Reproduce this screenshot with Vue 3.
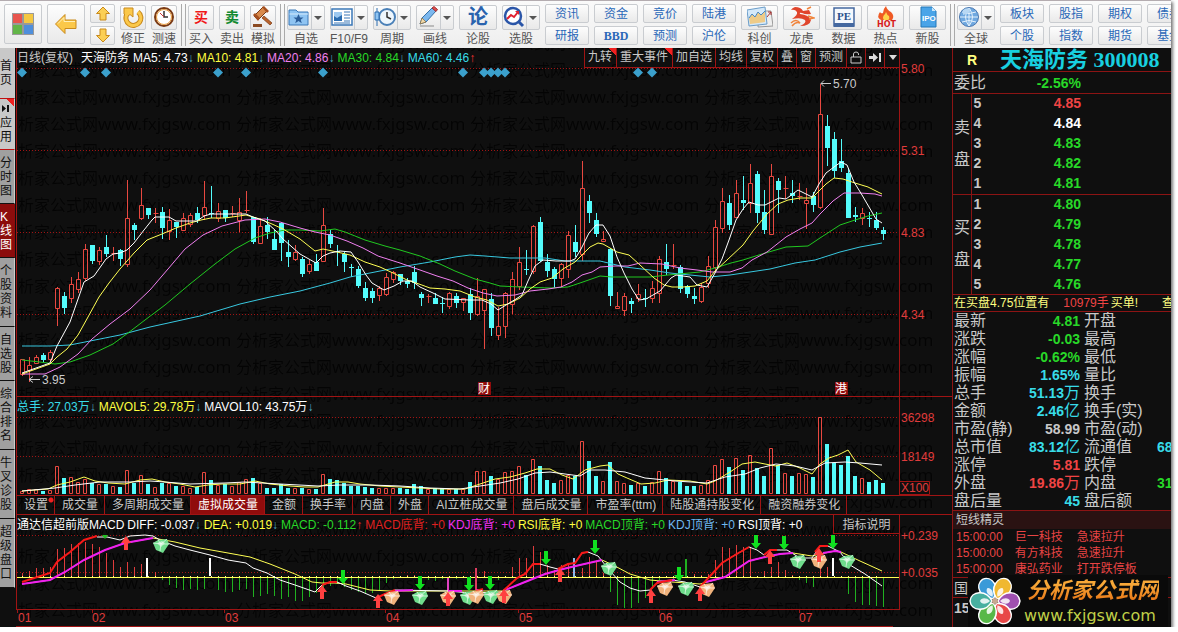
<template>
  <div class="window">
    <header class="toolbar">
      <div class="group">
        <button class="tile big" aria-label="menu"><svg width="22" height="22" viewBox="0 0 22 22" v-html="icons.menu"></svg></button>
        <button class="tile big" aria-label="back"><svg width="24" height="22" viewBox="0 0 24 22" v-html="icons.back"></svg></button>
        <div class="stack narrow">
          <button class="tile half" aria-label="up"><svg width="16" height="15" viewBox="0 0 16 15" v-html="icons.up"></svg></button>
          <button class="tile half" aria-label="down"><svg width="16" height="15" viewBox="0 0 16 15" v-html="icons.down"></svg></button>
        </div>
        <button v-for="t in tools1" :key="t.name" class="tool small">
          <span class="tile"><svg width="22" height="22" viewBox="0 0 22 22" v-html="icons[t.icon]"></svg></span>
          <span class="tool-name">{{ t.name }}</span>
        </button>
      </div>
      <i class="sep"></i>
      <div class="group">
        <button v-for="t in tools2" :key="t.name" class="tool small">
          <span class="tile"><svg width="22" height="22" viewBox="0 0 22 22" v-html="icons[t.icon]"></svg></span>
          <span class="tool-name">{{ t.name }}</span>
        </button>
      </div>
      <i class="sep"></i>
      <div class="group">
        <button v-for="t in tools3" :key="t.name" class="tool">
          <span class="tile" :class="{ split: t.menu }">
            <svg width="22" height="22" viewBox="0 0 22 22" v-html="icons[t.icon]"></svg>
            <i v-if="t.menu" class="caret"></i>
          </span>
          <span class="tool-name">{{ t.name }}</span>
        </button>
        <div v-for="pair in links1" :key="pair[0]" class="stack">
          <button v-for="n in pair" :key="n" class="tile half link" :class="{ latin: n === 'BBD' }">{{ n }}</button>
        </div>
        <button v-for="t in tools4" :key="t.name" class="tool wide">
          <span class="tile"><svg width="26" height="22" viewBox="0 0 26 22" v-html="icons[t.icon]"></svg></span>
          <span class="tool-name">{{ t.name }}</span>
        </button>
      </div>
      <i class="sep"></i>
      <div class="group">
        <button class="tool">
          <span class="tile split">
            <svg width="22" height="22" viewBox="0 0 22 22" v-html="icons.globe"></svg>
            <i class="caret"></i>
          </span>
          <span class="tool-name">全球</span>
        </button>
        <div v-for="pair in links2" :key="pair[0]" class="stack">
          <button v-for="n in pair" :key="n" class="tile half link">{{ n }}</button>
        </div>
      </div>
    </header>

    <div class="body">
      <nav class="side">
        <button v-for="s in sides" :key="s.name" class="side-item" :class="[s.kind, 'n' + s.name.length]">
          <svg v-if="s.play" width="9" height="9" viewBox="0 0 9 9"><path d="M1 1L5 4.500L1 8ZM6 1H8V8H6Z" fill="#111" /></svg>
          <span>{{ s.name }}</span>
        </button>
      </nav>

      <main class="charts">
        <svg class="watermark" aria-hidden="true">
          <defs>
            <pattern id="mark" width="234" height="27" patternUnits="userSpaceOnUse" x="219" y="8">
              <text x="1" y="20">分析家公式网<tspan>www.fxjgsw.com</tspan></text>
            </pattern>
          </defs>
          <rect width="100%" height="100%" fill="url(#mark)" />
        </svg>

        <div class="head">
          <div class="legend">
            <span class="grey">日线(复权)</span>
            <span class="stock">天海防务</span>
            <span v-for="m in maLegend" :key="m.text" :class="m.color">{{ m.text }}<i :class="m.dir">{{ m.dir === 'up' ? '↑' : '↓' }}</i></span>
          </div>
          <div class="tags">
            <button v-for="t in tags" :key="t.name" :class="{ hot: t.hot, single: t.name.length === 1 }">{{ t.name }}</button>
            <button class="single" aria-label="lock"><svg width="14" height="15" viewBox="0 0 14 15"><path d="M2 7H12V13H2ZM4.500 7V4Q4.500 2 7 2Q9.500 2 9.500 4V5" fill="none" stroke="#ccc" /></svg></button>
            <button class="single" aria-label="last"><svg width="14" height="15" viewBox="0 0 14 15"><path d="M1 6H5V3L10 7.500L5 12V9H1ZM11 3H13V12H11Z" fill="#ddd" /></svg></button>
            <button class="drop" aria-label="more"><svg width="8" height="5" viewBox="0 0 8 5"><path d="M0 0H8L4 5Z" fill="#ddd" /></svg></button>
          </div>
        </div>

        <!-- price -->
        <svg class="plot price" viewBox="16 8 936 329" preserveAspectRatio="xMinYMin meet">
          <g class="dotted"><path v-for="y in [8.5, 90.5, 172.5, 254.5]" :key="y" :d="`M17 ${y}H899`" /></g>
          <path class="frame" d="M16.500 8V337M899.500 8V337M16 336.500H952" />
          <path v-for="x in events" :key="x" :d="`M${x - 5} 12.500l5 -5l5 5l-5 5z`" fill="#3ba0cc" />
          <g class="bars">
            <template v-for="(c, i) in candles" :key="i">
              <path v-if="isUp(c)" :d="upShape(c, i)" class="up-bar" />
              <path v-else :d="downShape(c, i)" class="down-bar" />
            </template>
          </g>
          <g class="lines">
            <polyline v-for="l in maLines" :key="l.color" :points="l.points" :stroke="l.color" />
          </g>
          <path d="M821 23.500H831M824 20.500L821 23.500L824 26.500M29 319.500H40M33 316.500L29 319.500L33 322.500" fill="none" stroke="#ccc" />
          <g fill="#ccc"><text x="833" y="28">5.70</text><text x="42" y="324">3.95</text></g>
          <g class="axis">
            <text x="901" y="13">5.80</text><text x="901" y="95">5.31</text>
            <text x="901" y="177">4.83</text><text x="901" y="259">4.34</text>
          </g>
          <g class="badges">
            <rect x="478" y="322" width="13" height="13" /><text x="478" y="333">财</text>
            <rect x="835" y="322" width="13" height="13" /><text x="835" y="333">港</text>
          </g>
        </svg>

        <div class="legend line">
          <span class="cyan">总手: 27.03万<i class="down">↓</i></span>
          <span class="yellow">MAVOL5: 29.78万<i class="down">↓</i></span>
          <span class="white">MAVOL10: 43.75万<i class="down">↓</i></span>
        </div>

        <!-- volume -->
        <svg class="plot volume" viewBox="16 27 936 79" preserveAspectRatio="xMinYMin meet">
          <g class="dotted"><path d="M17 27.500H899M17 66.500H899" /></g>
          <path class="frame" d="M16.500 7V106M899.500 7V106M16 105.500H952M899.500 91.500H929.500V104.500H899.500" />
          <g class="bars">
            <template v-for="(v, i) in volumes" :key="i">
              <path v-if="isUp(candles[i])" :d="`M${cx(i) - 1.5} 103.500V${v + 0.5}h3V103.500z`" class="up-bar" />
              <rect v-else :x="cx(i) - 2" :y="v" width="4" :height="104 - v" fill="#54fcfc" />
            </template>
          </g>
          <g class="lines">
            <polyline :points="vol5" stroke="#ffff54" />
            <polyline :points="vol10" stroke="#fff" />
          </g>
          <g class="axis"><text x="901" y="32">36298</text><text x="901" y="71">18149</text><text x="901" y="102">X100</text></g>
        </svg>

        <div class="tabs">
          <button v-for="t in tabs" :key="t" :class="{ on: t === '虚拟成交量', dot: t === '设置' }">{{ t }}</button>
        </div>

        <div class="legend line macd-line">
          <span v-for="m in macdLegend" :key="m.text" :class="m.color">{{ m.text }}<i v-if="m.dir" :class="m.dir">{{ m.dir === 'up' ? '↑' : '↓' }}</i></span>
          <button class="explain">指标说明</button>
        </div>

        <!-- macd -->
        <svg class="plot macd" viewBox="16 144 936 93" preserveAspectRatio="xMinYMin meet">
          <defs>
            <g id="gem">
              <path d="M-8 -3L-3 -6L6 -7L8 -2L2 7L-5 4Z" />
              <path d="M-8 -3L0 -2L8 -2M0 -2L-1 5M-3 -6L0 -2L6 -7" fill="none" stroke="#fff" stroke-opacity=".6" />
              <path d="M-4 -3L1 -5L4 -3L0 1Z" fill="#fff" fill-opacity=".55" />
            </g>
          </defs>
          <g class="dotted"><path d="M17 145.500H899M17 182.500H899" /></g>
          <path class="frame" d="M16.500 125V220M899.500 144V220M16 219.500H899M16 236.500H893M17.500 220v3M92.500 220v3M224.500 220v3M385.500 220v3M518.500 220v3M659.500 220v3M799.500 220v3" />
          <g class="sticks">
            <path v-for="(m, i) in macd" :key="i" :d="`M${cx(i) + 0.5} 187V${m}`" :stroke="m < 187 ? '#e03c3c' : '#20b020'" />
          </g>
          <path d="M17 187.500H899" stroke="#ffff54" />
          <path d="M22 186.500h861" stroke="#ffff9c" stroke-dasharray="1 6" />
          <path v-for="s in spikes" :key="s[0]" :d="`M${s[0]} ${s[1]}V${s[2]}`" :stroke="s[3]" stroke-width="2" />
          <g class="lines">
            <polyline :points="dea" stroke="#ffff54" />
            <polyline :points="diff" stroke="#fff" />
            <polyline v-for="p in deaRise" :key="p" :points="p" class="thick" stroke="#f020f0" />
            <polyline v-for="p in diffRise" :key="p" :points="p" class="thick" stroke="#f81818" />
          </g>
          <use v-for="g in greenGems" :key="g[0]" href="#gem" :x="g[0]" :y="g[1]" fill="#6fdc8c" />
          <use v-for="g in goldGems" :key="g[0]" href="#gem" :x="g[0]" :y="g[1]" fill="#f0b27c" />
          <path v-for="a in sells" :key="a[0]" :d="`M${a[0] - 2} ${a[1]}h4v8h3l-5 6l-5 -6h3z`" fill="#10e020" />
          <path v-for="a in buys" :key="a[0]" :d="`M${a[0]} ${a[1]}l5 7h-3v7h-4v-7h-3z`" fill="#ff4040" />
          <path d="M102 145h6l-3 4z" fill="#20c020" />
          <g class="axis">
            <text x="901" y="150">+0.239</text><text x="901" y="187">+0.035</text>
            <text v-for="m in months" :key="m[1]" :x="m[0]" y="232">{{ m[1] }}</text>
          </g>
        </svg>
      </main>

      <aside class="quote">
        <h1><span>R</span>天海防务 300008</h1>
        <div class="ratio"><span>委比</span><b class="green">-2.56%</b></div>
        <table v-for="b in book" :key="b.side" class="levels">
          <tbody>
            <tr v-for="(r, i) in b.rows" :key="r[0]">
              <th v-if="i === 0" rowspan="5">{{ b.side[0] }}<br>{{ b.side[1] }}</th>
              <td class="no">{{ r[0] }}</td>
              <td class="val" :class="r[2]">{{ r[1] }}</td>
              <td></td>
            </tr>
          </tbody>
        </table>
        <p class="notice">在买盘4.75位置有<em>10979手</em>买单!<span>查</span></p>
        <table class="stats">
          <tbody>
            <tr v-for="s in stats" :key="s[0]">
              <th>{{ s[0] }}</th>
              <td :class="s[3]">{{ s[1] }}<span>{{ s[2] }}</span></td>
              <th class="second">{{ s[4] }}</th>
              <td class="more" :class="s[6]">{{ s[5] }}</td>
            </tr>
          </tbody>
        </table>
        <h2>短线精灵</h2>
        <ul class="feed">
          <li v-for="f in feed" :key="f[1]"><span>{{ f[0] }}</span><span>{{ f[1] }}</span><span>{{ f[2] }}</span></li>
        </ul>
        <div class="index">国</div>
        <div class="clock">15:00</div>
        <div class="brand">
          <svg width="54" height="52" viewBox="-27 -26 54 52">
            <g stroke="#fff" stroke-width="1.500">
              <path v-for="(p, i) in petals" :key="i" d="M0 -3C-12 -9 -10 -24 0 -25C10 -24 12 -9 0 -3Z" :fill="p" :transform="`rotate(${i * 60 - 30})`" />
            </g>
            <g fill="#fff" fill-opacity=".85">
              <path v-for="(p, i) in petals" :key="i" d="M0 -5C-4 -9 -3 -14 0 -15C3 -14 4 -9 0 -5Z" :transform="`rotate(${i * 60 - 30})`" />
            </g>
            <circle r="3" fill="#c8a890" />
          </svg>
          <div>
            <strong>分析家公式网</strong>
            <a href="#">www.fxjgsw.com</a>
          </div>
        </div>
      </aside>
    </div>
  </div>
</template>

<script setup>
const icons = {
  menu: '<path d="M0 0H22V22H0Z" fill="#999"/><path d="M1 1H10V10H1Z" fill="#e8554e"/><path d="M12 1H21V10H12Z" fill="#f5c842"/><path d="M1 12H10V21H1Z" fill="#62b548"/><path d="M12 12H21V21H12Z" fill="#4f8fdc"/>',
  back: '<path d="M1.500 11L11 1.500V7H22V15.500H11V20.500Z" fill="#fbc84a" stroke="#c98a1c"/><path d="M4 10.500L10 4.500V8.500H21" fill="none" stroke="#fff0b8"/>',
  up: '<path d="M8 1L14.500 7.500H11V14H5V7.500H1.500Z" fill="#fbcf55" stroke="#c98a1c"/>',
  down: '<path d="M8 14L14.500 7.500H11V1H5V7.500H1.500Z" fill="#fbcf55" stroke="#c98a1c"/>',
  redo: '<path d="M5 8A7.500 7.500 0 1 0 16 6" fill="none" stroke="#c98a1c" stroke-width="5"/><path d="M2 2H11V11L8 8.500L5 11L2 8Z" fill="#fbc84a" stroke="#c98a1c"/><path d="M5 8A7.500 7.500 0 1 0 16 6" fill="none" stroke="#fbc84a" stroke-width="3"/>',
  clock: '<circle cx="11" cy="11" r="9" fill="#fff" stroke="#7a3a14" stroke-width="2"/><circle cx="11" cy="11" r="7.500" fill="none" stroke="#e89a3c"/><path d="M11 5V11H15" fill="none" stroke="#333" stroke-width="1.500"/><path d="M11 11L7 7" stroke="#c33"/>',
  buy: '<text x="4" y="16" font-size="14" font-weight="700" fill="#f01818">买</text>',
  sell: '<text x="4" y="16" font-size="14" font-weight="700" fill="#128a30">卖</text>',
  gavel: '<path d="M12 10L20 17L18 19L10 12Z" fill="#b8622c" stroke="#7a3a14" stroke-width=".7"/><path d="M2 10L11 1L15 5L6 14Z" fill="#d98a4c" stroke="#7a3a14"/><path d="M1 9L3 7L8 12L6 15ZM10 1L12 0L17 5L15 7Z" fill="#a34f20"/><path d="M1 18H10V21H1Z" fill="#8a4a22"/>',
  fav: '<path d="M1 4H8L10 6H20V19H1Z" fill="#8fc4f2" stroke="#3b78b8"/><path d="M1.500 8H20" stroke="#d4eafc"/><path d="M10.500 8L12 11.500H15.500L12.700 13.700L13.800 17.300L10.500 15L7.200 17.300L8.300 13.700L5.500 11.500H9Z" fill="#2a5c98"/>',
  info: '<path d="M1 3H21V19H1Z" fill="#fff" stroke="#3b78b8" stroke-width="1.500"/><path d="M3 6H11V13H3Z" fill="#9cc8f0"/><path d="M3 10L6 12L11 9V15H3Z" fill="#2a6cb0"/><path d="M13 6H19M13 9H19M13 12H19M13 15H19M3 17H19" stroke="#3b78b8"/>',
  cycle: '<circle cx="13" cy="11" r="8" fill="#eef6fd" stroke="#4a80b8" stroke-width="2"/><path d="M13 6V11L17 13" fill="none" stroke="#333" stroke-width="1.500"/><path d="M3 2V20" stroke="#2a6cb0"/><path d="M1 6H5V14H1Z" fill="#8fc4f2" stroke="#2a6cb0"/>',
  pencil: '<path d="M3 18L5 12L15 2L19 5L9 16Z" fill="#7cb8ee" stroke="#3570a8"/><path d="M15 2L17 0.500L20.500 3.500L19 5.500Z" fill="#e05050" stroke="#a03030"/><path d="M3 18L5 12L9 16Z" fill="#f0d8a8" stroke="#8a6a3a" stroke-width=".7"/><path d="M3 20H17" stroke="#bbb" stroke-width="2"/>',
  talk: '<text x="1" y="18" font-size="20" font-weight="700" fill="#2a63ae">论</text>',
  pick: '<circle cx="10" cy="10" r="8" fill="#fff" stroke="#2a55a8" stroke-width="2.500"/><path d="M16 16L20 20" stroke="#2a55a8" stroke-width="3"/><path d="M4 13L8 9L11 11L15 6" fill="none" stroke="#e02030" stroke-width="2"/><path d="M12 5H16V9Z" fill="#e02030"/>',
  sci: '<path d="M12 5H24L26 20L11 21Z" fill="#eee" stroke="#999"/><path d="M0 4L18 1L20 18L2 20Z" fill="#d4e9fa" stroke="#6a9cc8"/><path d="M2 12L5 8L8 11L11 6L14 9L18 5V16L3 18Z" fill="#eecb88"/><path d="M2 12L5 8L8 11L11 6L14 9L18 5" fill="none" stroke="#4a88c0"/><path d="M20 11L24 6M21 6H24V9" stroke="#a33" fill="none"/>',
  dragon: '<path d="M6 1Q12 1 14 5L20 4L22 8Q17 9 13 7Q10 6 11 8Q20 9 22 14Q21 20 11 20Q18 17 16 14Q12 11 3 13Q9 9 8 6Q6 3 2 4Q3 2 6 1Z" fill="#e0452c"/><path d="M2 17Q7 12 11 17Q7 15 3 20M19 10L25 12L20 13M18 3L22 1" stroke="#f0843c" fill="none" stroke-width="1.500"/>',
  pe: '<path d="M3 2H23V20H3Z" fill="#f4f8fd" stroke="#4468a0" stroke-width="1.500"/><path d="M3 17H23V21H3Z" fill="#4468a0"/><text x="6" y="14" font-size="11" font-weight="700" font-family="Liberation Serif, serif" fill="#28508c">PE</text>',
  hot: '<path d="M13 0Q14 4 18 6Q22 10 19 14H8Q3 11 7 6Q8 8 10 7Q10 3 13 0Z" fill="#ef5a24"/><path d="M13 6Q14 9 16 10Q17 13 15 14H11Q9 12 11 9Q12 9 13 6Z" fill="#ffd34c"/><text x="4" y="21" font-size="8" font-weight="700" font-family="DejaVu Sans, sans-serif" fill="#d81c1c">HOT</text>',
  ipo: '<path d="M6 1H17L21 5V21H6Z" fill="#4aa4e8" stroke="#2478b8"/><path d="M17 1V5H21Z" fill="#cbe6fa"/><text x="7" y="15" font-size="8" font-weight="700" fill="#fff">IPO</text>',
  globe: '<circle cx="11" cy="11" r="9.500" fill="#6fa8e0" stroke="#4a78b0"/><path d="M2 11H20M11 2V20M4 6Q11 9 18 6M4 16Q11 13 18 16M11 2Q4 11 11 20M11 2Q18 11 11 20" fill="none" stroke="#e4f1fc"/><path d="M5 4Q9 1 13 3L10 7L5 9Z" fill="#b8d8f4"/>'
}

const tools1 = [{ name: '修正', icon: 'redo' }, { name: '测速', icon: 'clock' }]
const tools2 = [{ name: '买入', icon: 'buy' }, { name: '卖出', icon: 'sell' }, { name: '模拟', icon: 'gavel' }]
const tools3 = [
  { name: '自选', icon: 'fav', menu: true },
  { name: 'F10/F9', icon: 'info', menu: true },
  { name: '周期', icon: 'cycle', menu: true },
  { name: '画线', icon: 'pencil', menu: true },
  { name: '论股', icon: 'talk' },
  { name: '选股', icon: 'pick', menu: true }
]
const tools4 = [
  { name: '科创', icon: 'sci' },
  { name: '龙虎', icon: 'dragon' },
  { name: '数据', icon: 'pe' },
  { name: '热点', icon: 'hot' },
  { name: '新股', icon: 'ipo' }
]
const links1 = [['资讯', '研报'], ['资金', 'BBD'], ['竞价', '预测'], ['陆港', '沪伦']]
const links2 = [['板块', '个股'], ['股指', '指数'], ['期权', '期货'], ['债券', '基金']]

const sides = [
  { name: '首页', kind: 'light' },
  { name: '应用', kind: 'light flag', play: true },
  { name: '分时图', kind: '' },
  { name: 'K线图', kind: 'active' },
  { name: '个股资料', kind: '' },
  { name: '自选股', kind: '' },
  { name: '综合排名', kind: '' },
  { name: '牛叉诊股', kind: '' },
  { name: '超级盘口', kind: '' }
]

const maLegend = [
  { text: 'MA5: 4.73', color: 'white', dir: 'down' },
  { text: 'MA10: 4.81', color: 'yellow', dir: 'down' },
  { text: 'MA20: 4.86', color: 'pink', dir: 'down' },
  { text: 'MA30: 4.84', color: 'green', dir: 'down' },
  { text: 'MA60: 4.46', color: 'cyan', dir: 'up' }
]
const macdLegend = [
  { text: '通达信超前版MACD', color: 'white' },
  { text: 'DIFF: -0.037', color: 'white', dir: 'down' },
  { text: 'DEA: +0.019', color: 'yellow', dir: 'down' },
  { text: 'MACD: -0.112', color: 'green', dir: 'up' },
  { text: 'MACD底背: +0', color: 'red' },
  { text: 'KDJ底背: +0', color: 'magenta' },
  { text: 'RSI底背: +0', color: 'yellow' },
  { text: 'MACD顶背: +0', color: 'green' },
  { text: 'KDJ顶背: +0', color: 'blue' },
  { text: 'RSI顶背: +0', color: 'white' }
]
const tags = [
  { name: '九转', hot: true },
  { name: '重大事件', hot: true },
  { name: '加自选' },
  { name: '均线' },
  { name: '复权' },
  { name: '叠' },
  { name: '窗' },
  { name: '预测' }
]
const tabs = ['设置', '成交量', '多周期成交量', '虚拟成交量', '金额', '换手率', '内盘', '外盘', 'AI立桩成交量', '盘后成交量', '市盈率(ttm)', '陆股通持股变化', '融资融券变化']

// [high, body top, body bottom, low, 1 = rising]
const candles = [
  [299, 299, 314, 316, 1], [297, 305, 310, 322, 1], [295, 297, 303, 304, 1], [293, 295, 300, 303, 0], [290, 292, 299, 302, 1],
  [227, 228, 248, 266, 1], [232, 236, 248, 254, 0], [217, 224, 238, 243, 1], [212, 219, 229, 233, 1], [184, 189, 218, 221, 1],
  [185, 185, 201, 204, 0], [187, 190, 201, 205, 1], [175, 187, 194, 197, 0], [187, 193, 193, 201, 1], [189, 190, 199, 206, 0],
  [120, 158, 204, 207, 1], [163, 165, 170, 180, 0], [128, 145, 158, 160, 1], [148, 148, 155, 159, 0], [148, 153, 153, 163, 1],
  [147, 152, 168, 179, 0], [149, 160, 171, 180, 1], [162, 162, 167, 178, 0], [153, 158, 170, 170, 1], [153, 155, 164, 167, 1],
  [147, 153, 160, 163, 0], [121, 147, 155, 160, 1], [126, 153, 154, 158, 0], [143, 151, 158, 162, 1], [150, 150, 158, 162, 0],
  [146, 153, 153, 157, 1], [138, 152, 160, 172, 1], [131, 150, 150, 153, 1], [157, 157, 182, 184, 0], [158, 166, 183, 184, 1],
  [157, 165, 172, 179, 0], [170, 179, 190, 190, 0], [162, 163, 183, 201, 0], [180, 192, 197, 207, 0], [185, 192, 199, 201, 1],
  [197, 199, 214, 217, 0], [200, 204, 211, 214, 1], [194, 202, 211, 211, 0], [148, 165, 201, 202, 1], [170, 174, 184, 188, 0],
  [185, 191, 192, 206, 0], [192, 194, 202, 212, 0], [204, 207, 208, 217, 0], [206, 209, 226, 228, 0], [222, 228, 238, 241, 0],
  [228, 231, 238, 243, 0], [226, 228, 235, 241, 1], [213, 217, 234, 236, 1], [211, 212, 219, 223, 1], [214, 214, 221, 225, 0],
  [218, 221, 224, 228, 0], [206, 212, 223, 229, 0], [232, 234, 238, 246, 0], [234, 236, 236, 243, 1], [233, 238, 244, 244, 0],
  [237, 243, 244, 253, 0], [232, 233, 246, 249, 1], [233, 236, 243, 248, 0], [238, 238, 242, 251, 1], [228, 234, 253, 260, 0],
  [218, 236, 254, 256, 1], [229, 229, 250, 289, 1], [233, 239, 268, 276, 0], [247, 266, 275, 280, 1], [232, 233, 266, 278, 1],
  [212, 219, 244, 254, 1], [187, 202, 226, 230, 1], [190, 209, 210, 215, 0], [165, 166, 211, 214, 1], [157, 162, 201, 202, 0],
  [194, 202, 211, 217, 0], [207, 209, 219, 228, 0], [203, 204, 218, 227, 1], [171, 175, 209, 218, 1], [165, 182, 192, 197, 0],
  [101, 128, 194, 201, 1], [135, 141, 153, 163, 0], [153, 160, 174, 177, 0], [171, 179, 181, 182, 1], [188, 189, 236, 246, 0],
  [232, 246, 248, 248, 1], [233, 236, 250, 256, 1], [238, 241, 244, 253, 0], [224, 234, 238, 242, 1], [229, 238, 239, 247, 0],
  [221, 228, 238, 243, 1], [196, 199, 233, 243, 1], [184, 202, 209, 215, 0], [184, 205, 205, 209, 1], [205, 207, 229, 233, 0],
  [225, 226, 234, 238, 0], [228, 236, 239, 244, 0], [223, 227, 241, 243, 1], [196, 206, 223, 228, 1], [160, 167, 207, 212, 1],
  [128, 141, 168, 173, 1], [135, 143, 165, 170, 0], [120, 133, 157, 158, 1], [116, 140, 143, 150, 0], [104, 123, 143, 153, 1],
  [111, 114, 153, 163, 0], [130, 152, 170, 174, 0], [104, 116, 174, 174, 1], [118, 121, 130, 153, 0], [116, 128, 128, 139, 1],
  [120, 133, 136, 143, 0], [123, 136, 137, 140, 1], [128, 140, 143, 169, 1], [132, 136, 145, 152, 0], [24, 54, 147, 149, 1],
  [55, 66, 88, 106, 0], [72, 79, 111, 118, 0], [79, 101, 108, 112, 0], [108, 113, 158, 158, 0], [147, 155, 157, 162, 0],
  [148, 153, 158, 165, 1], [152, 158, 159, 167, 0], [152, 160, 168, 170, 0], [167, 170, 174, 180, 0]
]

const volumes = [
  101, 99, 99, 101, 100, 76, 88, 87, 92, 89, 93, 94, 94, 96, 97, 80, 93, 85, 94, 97, 93, 93, 96, 96, 98, 97, 82, 90, 95, 94,
  96, 92, 89, 88, 93, 98, 98, 94, 98, 98, 98, 99, 99, 84, 89, 90, 93, 96, 96, 97, 98, 98, 98, 98, 98, 99, 94, 96, 99, 98,
  98, 99, 99, 99, 92, 81, 81, 86, 89, 82, 81, 76, 85, 69, 76, 90, 93, 90, 85, 86, 51, 71, 86, 91, 72, 91, 93, 95, 93, 96,
  92, 81, 88, 91, 92, 96, 96, 95, 90, 75, 69, 77, 68, 80, 65, 78, 86, 58, 75, 83, 86, 83, 84, 87, 27, 54, 73, 75, 66, 86,
  88, 92, 90, 93
]

// bar ends, the zero line is at 187
const macd = [
  183, 181, 178, 178, 177, 159, 158, 154, 153, 152, 154, 157, 163, 170, 177, 172, 177, 174, 187, 182, 190, 195, 198, 200, 199, 200, 199, 187, 200, 202,
  202, 200, 199, 207, 206, 204, 206, 209, 207, 211, 211, 207, 203, 200, 196, 194, 197, 200, 202, 203, 203, 200, 193, 189, 187, 185, 185, 189, 190, 191,
  189, 187, 189, 187, 187, 187, 181, 187, 190, 186, 177, 168, 168, 156, 162, 175, 180, 175, 175, 187, 178, 167, 172, 183, 202, 215, 218, 218, 213, 208,
  199, 190, 187, 189, 190, 187, 184, 185, 184, 170, 157, 158, 155, 157, 157, 187, 181, 177, 172, 180, 185, 190, 193, 197, 173, 177, 187, 187, 204, 212,
  215, 215, 216, 217
]

const cx = i => 22 + i * 7
const isUp = c => c[4] === 1

function upShape([high, top, bottom, low], i) {
  const x = cx(i) + 0.5
  const t = top + 0.5
  const b = bottom + 0.5
  if (b - t < 2) return `M${x} ${high}V${low}M${x - 2} ${t}h5`
  return `M${x - 2} ${t}h4V${b}h-4zM${x} ${high}V${t}M${x} ${b}V${low}`
}

function downShape([high, top, bottom, low], i) {
  const x = cx(i) + 0.5
  return `M${x - 2.5} ${top}h5V${Math.max(bottom, top + 1)}h-5zM${x - 0.5} ${high}h1V${low}h-1z`
}

const maLines = [
  { color: '#38c8e0', points: '22,286 50,286 70,285 90,281 120,275 150,267 200,256 240,244 270,237 300,231 330,223 350,217 375,212 400,207 430,202 455,197 470,195 485,196 510,198 545,198 565,201 600,201 625,207 650,210 670,213 690,215 710,217 730,215 750,212 770,209 795,203 815,200 840,192 860,187 882,183' },
  { color: '#20c820', points: '22,300 40,302 55,304 70,302 90,295 113,284 128,273 145,260 165,245 190,224 215,204 235,189 255,178 270,173 285,170 300,170 320,171 335,169 345,172 365,180 385,186 400,190 420,196 440,204 455,211 475,219 490,223 500,226 520,227 550,228 568,227 580,223 600,216 612,217 650,217 668,215 700,212 715,208 731,203 743,200 762,194 786,187 808,186 820,178 840,165 855,160 868,156 882,153' },
  { color: '#f080f0', points: '22,314 45,314 60,307 78,294 92,279 110,264 130,249 150,230 168,209 185,189 203,175 222,166 245,160 265,159 280,162 300,168 315,172 330,175 347,181 363,188 378,196 400,203 420,210 437,216 453,221 468,228 483,233 497,236 515,235 530,231 548,229 561,227 572,222 582,215 592,212 600,207 615,206 628,206 640,203 662,204 680,208 697,210 712,212 730,212 742,208 752,200 767,192 786,177 800,169 812,163 820,154 833,141 844,133 860,133 875,134 882,136' },
  { color: '#ffff54', points: '22,314 50,304 57,297 67,289 78,275 88,257 99,237 109,223 120,209 134,193 147,180 162,174 176,168 190,163 201,160 211,158 225,158 246,155 260,159 272,164 283,169 300,179 315,191 323,189 337,192 350,195 365,202 380,207 393,213 407,220 419,224 430,228 445,229 460,231 475,237 487,240 498,246 508,244 520,238 530,229 540,222 552,218 563,209 575,202 582,195 590,187 598,183 603,184 617,192 629,195 640,205 654,218 664,225 672,227 683,227 695,226 707,221 715,211 727,200 743,185 753,171 767,154 778,144 788,140 800,138 812,138 826,124 834,118 843,119 855,123 868,127 882,134' },
  { color: '#ffffff', points: '22,313 50,303 57,286 70,262 84,222 94,216 106,199 113,194 120,193 127,190 134,183 144,170 152,160 155,157 169,157 176,161 197,161 204,156 211,154 246,154 253,157 265,161 276,171 283,179 292,187 300,194 316,203 323,196 330,193 340,191 351,192 358,202 366,215 372,223 384,230 394,226 403,221 412,221 420,227 433,233 445,239 470,240 482,240 491,244 498,250 506,245 516,239 522,235 528,221 535,206 543,200 556,201 570,201 575,199 581,189 589,173 596,165 603,165 610,176 617,197 624,213 632,229 639,240 646,239 660,231 671,218 676,215 690,217 697,225 707,227 715,213 722,199 729,180 736,160 743,149 749,142 758,145 765,145 779,138 786,139 798,130 806,134 812,137 819,124 826,113 834,107 841,102 847,105 854,122 862,135 869,147 876,159 882,163' }
]

const vol5 = '22,101 48,99 57,95 70,92 84,87 95,91 108,93 125,94 140,90 152,89 165,92 180,94 195,97 208,95 222,94 240,94 255,91 270,94 290,96 305,97 318,97 335,92 348,92 360,94 380,96 400,97 420,98 440,99 465,99 480,94 495,89 510,87 525,83 537,79 550,79 562,85 573,89 585,80 600,76 608,75 618,84 627,88 641,94 655,93 668,90 690,91 707,94 715,91 730,82 742,74 755,72 765,74 776,76 787,73 800,78 812,84 820,74 829,68 838,65 848,60 856,72 870,80 882,90'
const vol10 = '22,101 55,98 75,95 100,92 130,92 150,91 165,92 190,94 225,93 245,92 280,94 318,96 340,95 370,95 400,96 430,98 460,99 480,96 500,93 518,89 535,83 550,82 565,84 580,86 590,80 605,80 625,82 645,88 675,91 707,93 725,87 745,84 760,78 776,74 795,76 812,80 825,73 845,72 860,73 882,75'

const diff = '97,147 107,147 120,150 130,146 145,145 153,146 160,150 175,156 190,160 210,165 228,170 246,173 253,178 267,183 280,190 295,195 315,202 322,195 330,192 337,192 346,196 360,201 376,208 385,204 395,200 448,201 470,203 503,202 517,188 525,184 533,174 540,174 550,177 558,179 568,174 575,173 582,163 588,162 598,166 610,181 620,192 630,198 640,201 650,200 657,193 672,190 685,192 700,197 712,184 722,173 735,165 749,157 757,160 764,165 770,160 787,160 800,168 812,168 820,156 828,156 840,162 850,175 865,184 882,196'
const dea = '22,194 50,190 65,182 84,170 105,160 125,153 153,148 175,152 200,158 228,163 250,167 270,174 295,184 312,192 322,193 335,193 346,194 370,200 390,201 503,201 525,192 545,184 563,179 580,175 602,170 613,175 630,184 650,190 672,192 700,194 725,187 749,171 765,167 780,164 793,163 812,166 820,164 835,161 841,162 860,171 882,181'
const diffRise = [
  '22,192 50,183 57,172 70,162 84,150 97,146',
  '322,195 330,192 337,192',
  '376,208 385,204 395,200',
  '476,201 483,199',
  '503,201 517,188 525,184 533,174 540,174',
  '558,179 568,174 575,173 582,163 588,162',
  '650,200 657,193 672,190',
  '700,197 712,184 722,173 735,165 749,157',
  '764,165 770,160 777,160',
  '815,162 820,156 828,156'
]
const deaRise = [
  '22,194 50,190 65,182 84,170 105,160 125,153 153,148',
  '393,201 413,200',
  '448,201 462,201',
  '476,200 483,200',
  '505,200 525,192 545,184 563,179 580,175 602,170',
  '657,192 675,190',
  '706,192 725,187 749,171 765,167 780,164 793,163',
  '823,163 835,161 841,162'
]

const spikes = [
  [147, 168, 187, '#fff'], [210, 168, 186, '#fff'], [448, 188, 208, '#e040c0'], [476, 178, 200, '#e03c60'],
  [574, 168, 187, '#8cb8e8'], [686, 169, 187, '#20b020'], [833, 168, 186, '#fff']
]
const sells = [[343, 180], [420, 186], [469, 187], [490, 186], [546, 161], [595, 150], [679, 177], [756, 145], [784, 146], [833, 145]]
const buys = [[126, 146], [322, 195], [378, 204], [448, 202], [504, 199], [560, 178], [651, 199], [700, 197], [770, 160], [819, 158]]
const greenGems = [[161, 156], [420, 208], [468, 208], [491, 207], [609, 179], [686, 199], [798, 172], [847, 172]]
const goldGems = [[392, 208], [448, 208], [476, 207], [504, 207], [665, 199], [707, 200], [819, 172]]
const months = [[18, '01'], [92, '02'], [225, '03'], [386, '04'], [519, '05'], [659, '06'], [799, '07']]
const events = [22, 85, 106, 218, 246, 323, 463, 484, 491, 498, 505, 638, 652]

const book = [
  { side: '卖盘', rows: [[5, '4.85', 'red'], [4, '4.84', 'white'], [3, '4.83', 'green'], [2, '4.82', 'green'], [1, '4.81', 'green']] },
  { side: '买盘', rows: [[1, '4.80', 'green'], [2, '4.79', 'green'], [3, '4.78', 'green'], [4, '4.77', 'green'], [5, '4.76', 'green']] }
]
const stats = [
  ['最新', '4.81', '', 'green', '开盘', '', ''],
  ['涨跌', '-0.03', '', 'green', '最高', '', ''],
  ['涨幅', '-0.62%', '', 'green', '最低', '', ''],
  ['振幅', '1.65%', '', 'cyan', '量比', '', ''],
  ['总手', '51.13', '万', 'cyan', '换手', '', ''],
  ['金额', '2.46', '亿', 'cyan', '换手(实)', '', ''],
  ['市盈(静)', '58.99', '', 'grey', '市盈(动)', '', ''],
  ['总市值', '83.12', '亿', 'cyan', '流通值', '68', 'cyan'],
  ['涨停', '5.81', '', 'red', '跌停', '', ''],
  ['外盘', '19.86', '万', 'red', '内盘', '31', 'green'],
  ['盘后量', '45', '', 'cyan', '盘后额', '', '']
]
const feed = [
  ['15:00:00', '巨一科技', '急速拉升'],
  ['15:00:00', '有方科技', '急速拉升'],
  ['15:00:00', '康弘药业', '打开跌停板']
]
const petals = ['#3a9ad8', '#f0b830', '#a050b0', '#e84848', '#58b848', '#48b0a0']
</script>

<style>
body {
  background: #fff;
}
</style>

<style scoped>
.window {
  margin-right: 7px;
  background: #0f0f0f;
  color: #c8c8c8;
  font: 12px/20px "Liberation Sans", Arial, "Noto Sans CJK SC", sans-serif;
  box-shadow: 2px 2px 3px #777;
}
.window * {
  box-sizing: border-box;
}
button {
  padding: 0;
  margin: 0;
  border: 0;
  background: none;
  color: inherit;
  font: inherit;
  white-space: nowrap;
}
i {
  font-style: normal;
}
svg {
  display: block;
  flex: none;
}

/* toolbar */
.toolbar {
  display: flex;
  height: 48px;
  padding: 3px 0 0 4px;
  overflow: hidden;
  border-top: 1px solid #b4acb0;
  background: linear-gradient(#fafafa, #eee);
  color: #555;
}
.group {
  display: flex;
  flex: none;
  gap: 5px;
}
.sep {
  flex: none;
  width: 5px;
  height: 42px;
  margin: 0 2px 0 4px;
  border: solid #aaa;
  border-width: 0 1px;
}
.tile {
  display: flex;
  align-items: center;
  justify-content: center;
  height: 25px;
  border: 1px solid #c9ccd0;
  border-radius: 2px;
  background: linear-gradient(#fdfdfd, #e9e9e9);
}
.tile.big {
  width: 38px;
  height: 40px;
}
.tile.half {
  width: 100%;
  height: 19px;
}
.stack {
  display: flex;
  flex-direction: column;
  flex: none;
  gap: 3px;
  width: 44px;
}
.stack.narrow {
  width: 25px;
}
.link {
  color: #2a68b8;
  line-height: 16px;
}
.link.latin {
  font-family: "Liberation Serif", serif;
  font-weight: 700;
}
.tool {
  width: 38px;
  flex: none;
}
.tool.small {
  width: 26px;
}
.tool.wide {
  width: 37px;
}
.tool-name {
  display: flex;
  justify-content: center;
  line-height: 18px;
}
.split {
  justify-content: space-between;
}
.caret {
  width: 13px;
  height: 23px;
  border-left: 1px solid #c9ccd0;
}
.caret::before {
  content: "";
  display: block;
  margin: 10px 2px;
  border: solid transparent;
  border-width: 4px 4px 0;
  border-top-color: #555;
}

.body {
  display: grid;
  grid-template-columns: 16px minmax(0, 1fr) 219px;
}

/* left navigation */
.side {
  display: flex;
  flex-direction: column;
}
.side-item {
  display: flex;
  flex-direction: column;
  justify-content: center;
  width: 15px;
  height: 54px;
  border-bottom: 1px solid #111;
  border-right: 1px solid #ccc;
  background: #a0a0a0;
  color: #111;
  line-height: 14px;
  text-align: left;
}
.side-item span {
  width: 12px;
  white-space: normal;
  word-break: break-all;
}
.side-item.n4 {
  height: 69px;
}
.side-item.light {
  height: 51px;
  border-bottom-color: #c01010;
  background: #c8c8c8;
}
.side-item.flag {
  background: linear-gradient(225deg, #f02020 5px, #c8c8c8 5px);
}
.side-item.flag svg {
  margin: 0 0 3px 1px;
}
.side-item.active {
  background: #8c0c0c;
  border-right-color: #8c0c0c;
  color: #fff;
}

/* charts */
.charts {
  position: relative;
}
.watermark {
  position: absolute;
  inset: 0;
  width: calc(100% - 16px);
  height: 100%;
  font-size: 16px;
  fill: #040404;
}
.watermark tspan {
  font-family: "Noto Sans", sans-serif;
  font-size: 17px;
}
.head,
.legend,
.plot,
.tabs {
  position: relative;
}
.head {
  display: flex;
  justify-content: space-between;
  height: 20px;
  padding-right: 52px;
  border-left: 1px solid #a01414;
}
.legend {
  display: flex;
  gap: 3px;
  white-space: nowrap;
}
.legend.line {
  height: 20px;
  border-left: 1px solid #a01414;
}
.legend.macd-line {
  height: 19px;
  margin-right: 52px;
  border-right: 1px solid #a01414;
}
.stock {
  margin: 0 1px 0 5px;
  color: #fff;
}
.explain {
  width: 66px;
  margin-left: auto;
  border: solid #a01414;
  border-width: 0 0 1px 1px;
}
.tags {
  display: flex;
}
.tags button {
  padding: 0 3px;
  border: 1px solid #a01414;
  border-width: 0 0 1px 1px;
  line-height: 19px;
}
.tags button.single {
  width: 19px;
  padding: 0 2px;
}
.tags button.drop {
  width: 16px;
  padding: 0 4px;
  border-right-width: 1px;
}
.tags button.hot {
  padding-right: 4px;
  background: linear-gradient(225deg, #f02020 5px, transparent 5px);
}
.plot {
  width: 100%;
  overflow: visible;
}
.price {
  height: 329px;
}
.volume {
  height: 79px;
}
.macd {
  height: 93px;
}
.dotted path {
  stroke: #a01414;
  stroke-dasharray: 1 2;
}
.frame {
  fill: none;
  stroke: #a01414;
}
.lines polyline {
  fill: none;
  stroke-width: 1;
}
.lines .thick {
  stroke-width: 2;
}
.up-bar {
  fill: none;
  stroke: #e84840;
}
.down-bar {
  fill: #54fcfc;
}
.axis {
  fill: #e03c3c;
}
.badges rect {
  fill: #900c0c;
}
.badges text {
  fill: #fff;
}
.tabs {
  display: flex;
  height: 19px;
  border: solid #a01414;
  border-width: 0 0 1px 1px;
}
.tabs button {
  padding: 0 6px 0 7px;
  border-right: 1px solid #a01414;
  line-height: 18px;
}
.tabs .on {
  background: #900c0c;
  color: #fff;
}
.tabs .dot {
  background: radial-gradient(circle at 34px 4px, #f02020 2px, transparent 3px);
}

.white { color: #fff; }
.grey { color: #c8c8c8; }
.yellow { color: #ffff40; }
.pink { color: #f080f0; }
.magenta { color: #f030f0; }
.green { color: #28d828; }
.cyan { color: #38dce8; }
.blue { color: #70b8f0; }
.red { color: #f04444; }
.legend .red { color: #e02020; }
.legend .up { color: #f03030; }
.legend .down { color: #50b0c8; }

/* quote panel */
.quote {
  position: relative;
  border-left: 1px solid #8c1414;
  overflow: hidden;
}
h1 {
  height: 24px;
  margin: 0;
  border-bottom: 1px solid #8c1414;
  color: #18d0e0;
  font: bold 22px/24px "Liberation Serif", "Noto Sans CJK SC", serif;
  white-space: nowrap;
}
h1 span {
  display: inline-block;
  width: 47px;
  padding: 2px 0 0 14px;
  color: #ffff80;
  font: bold 14px/20px "Liberation Sans", Arial, sans-serif;
  vertical-align: top;
}
.ratio {
  display: flex;
  justify-content: space-between;
  width: 128px;
  height: 21px;
  padding-left: 1px;
  font-size: 16px;
  line-height: 22px;
}
.ratio b {
  font-size: 14px;
}
table {
  width: 100%;
  border-collapse: collapse;
  table-layout: fixed;
}
th,
td {
  padding: 0;
  font-size: 16px;
  font-weight: 400;
  text-align: left;
  white-space: nowrap;
}
.levels {
  border-top: 1px solid #8c1414;
}
.levels tr {
  height: 20px;
}
.levels th {
  width: 18px;
  padding-left: 1px;
  border-right: 1px solid #8c1414;
  line-height: 32px;
}
.levels td {
  line-height: 19px;
}
.levels .no {
  width: 30px;
  padding-left: 2px;
  font-size: 14px;
  font-weight: 700;
}
.levels .val {
  width: 80px;
  font-size: 14px;
  font-weight: 700;
  text-align: right;
}
.notice {
  display: flex;
  height: 18px;
  margin: 0;
  padding-left: 1px;
  border: solid #8c1414;
  border-width: 1px 0;
  color: #ffff80;
  line-height: 16px;
  white-space: nowrap;
}
.notice em {
  margin: 0 2px 0 14px;
  color: #f04444;
  font-style: normal;
}
.notice span {
  margin-left: 24px;
}
.stats tr {
  height: 18px;
}
.stats th,
.stats td {
  line-height: 18px;
}
.stats th {
  width: 64px;
  padding-left: 1px;
}
.stats td {
  width: 63px;
  font-size: 14px;
  font-weight: 700;
  text-align: right;
}
.stats td span {
  font-size: 16px;
  font-weight: 400;
}
.stats .second {
  width: 77px;
  padding-left: 4px;
}
.stats .more {
  width: auto;
  overflow: hidden;
  text-align: left;
}
h2 {
  height: 19px;
  margin: 0;
  padding-left: 3px;
  border-top: 1px solid #8c1414;
  background: #2a1212;
  font: inherit;
  line-height: 18px;
}
.feed {
  height: 48px;
  margin: 0;
  padding: 0 0 0 3px;
  list-style: none;
  color: #e84444;
  line-height: 16px;
}
.feed li {
  display: flex;
  gap: 12px;
}
.feed span:nth-child(2) {
  margin-right: 2px;
}
.index,
.clock {
  height: 20px;
  padding-left: 1px;
  border-top: 1px solid #8c1414;
  font-size: 14px;
  line-height: 20px;
}
.clock {
  font-weight: 700;
}
.brand {
  position: absolute;
  right: 3px;
  bottom: 0;
  display: flex;
  width: 200px;
  height: 52px;
  background: #0a0a0a;
}
.brand div {
  display: flex;
  flex-direction: column;
}
.brand strong {
  margin-left: 5px;
  background: linear-gradient(#f8a838 30%, #e87818 80%);
  -webkit-background-clip: text;
  -webkit-text-fill-color: transparent;
  font-size: 22px;
  font-style: italic;
  line-height: 32px;
}
.brand a {
  margin-left: 2px;
  color: #c0d048;
  font: 16px/18px "DejaVu Sans", sans-serif;
  text-decoration: none;
}
</style>
